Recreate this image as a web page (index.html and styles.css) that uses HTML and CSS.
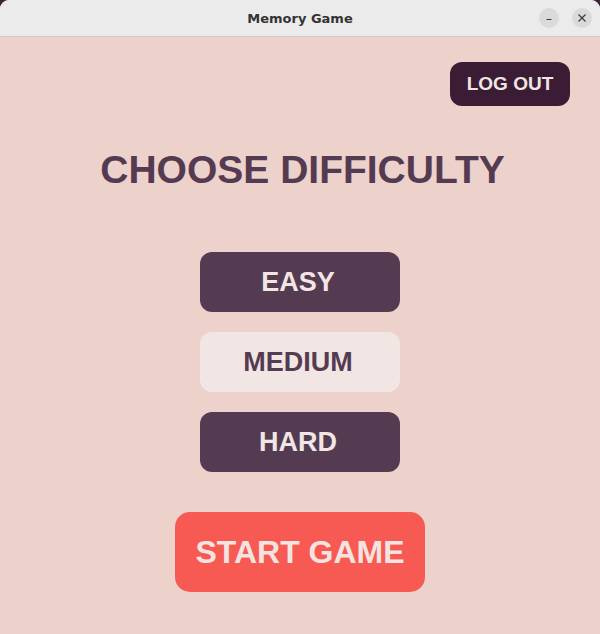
FILE: index.html
```html
<!DOCTYPE html>
<html>
<head>
<meta charset="utf-8">
<link rel="stylesheet" href="styles.css">
<title>Memory Game</title>
</head>
<body>
<div class="window">
  <div class="titlebar">
    <span class="title">Memory Game</span>
    <div class="controls">
      <span class="ctl"><svg width="10" height="10" viewBox="0 0 10 10"><line x1="2.5" y1="6.5" x2="7.5" y2="6.5" stroke="#3a3a3a" stroke-width="1"/></svg></span>
      <span class="ctl"><svg width="10" height="10" viewBox="0 0 10 10"><path d="M1.5 1.5 L8.5 8.5 M8.5 1.5 L1.5 8.5" stroke="#3a3a3a" stroke-width="1.2"/></svg></span>
    </div>
  </div>
  <main class="content">
    <div class="toprow"><button class="logout">LOG OUT</button></div>
    <h1 class="heading">CHOOSE DIFFICULTY</h1>
    <div class="levels">
      <button class="level">EASY</button>
      <button class="level selected">MEDIUM</button>
      <button class="level">HARD</button>
    </div>
    <button class="start">START GAME</button>
  </main>
</div>
</body>
</html>
```
FILE: styles.css
```css
html, body {
  margin: 0;
  padding: 0;
  background: #3b2333;
}
.window {
  width: 600px;
  height: 634px;
  display: flex;
  flex-direction: column;
  border-radius: 9px 9px 0 0;
  overflow: hidden;
  background: #edd1cb;
}
.titlebar {
  height: 36px;
  flex: none;
  background: #ebebeb;
  border-bottom: 1px solid #c9c9c9;
  display: flex;
  align-items: center;
  justify-content: center;
  position: relative;
}
.title {
  font-family: "DejaVu Sans", sans-serif;
  font-weight: bold;
  font-size: 13px;
  color: #333;
}
.controls {
  position: absolute;
  right: 8px;
  top: 8px;
  display: flex;
  gap: 13px;
}
.ctl {
  width: 20px;
  height: 20px;
  border-radius: 50%;
  background: #dadada;
  display: flex;
  align-items: center;
  justify-content: center;
}
.content {
  flex: 1;
  display: flex;
  flex-direction: column;
  align-items: center;
  font-family: "Liberation Sans", Arial, sans-serif;
  font-weight: bold;
}
button {
  font-family: "Liberation Sans", Arial, sans-serif;
  font-weight: bold;
  border: none;
  cursor: pointer;
  padding: 0;
}
.toprow {
  align-self: stretch;
  display: flex;
  justify-content: flex-end;
  padding: 25px 30px 0 0;
}
.logout {
  width: 120px;
  height: 44px;
  border-radius: 12px;
  background: #3a1d34;
  color: #f1e6e4;
  font-size: 19px;
}
.heading {
  margin: 40px 0 0 0;
  padding-left: 5px;
  height: 48px;
  line-height: 48px;
  font-size: 39px;
  color: #553b52;
}
.levels {
  margin-top: 58px;
  display: flex;
  flex-direction: column;
  gap: 20px;
}
.level {
  width: 200px;
  height: 60px;
  padding-right: 4px;
  border-radius: 12px;
  background: #553b52;
  color: #f1e6e4;
  font-size: 27px;
}
.level.selected {
  background: #f1e6e4;
  color: #553b52;
}
.start {
  margin-top: 40px;
  width: 250px;
  height: 80px;
  border-radius: 15px;
  background: #f75a53;
  color: #f3e4e1;
  font-size: 32px;
}
```
